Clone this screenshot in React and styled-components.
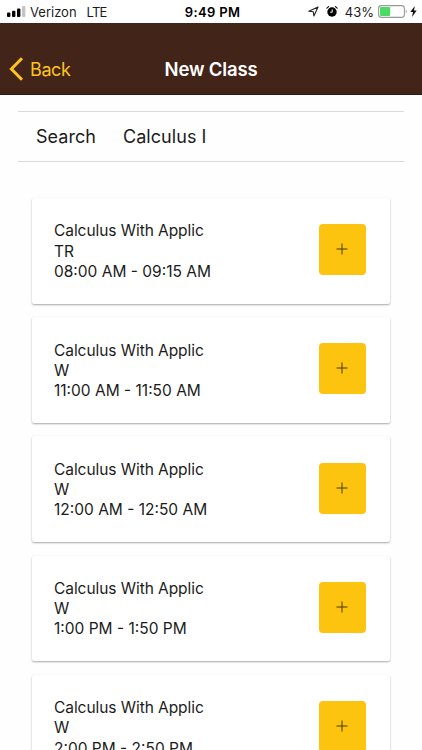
import React from "react";
import styled, { createGlobalStyle, ThemeProvider } from "styled-components";

const theme = {
  brown: "#432418",
  gold: "#fcc30f",
  back: "#fdc422",
  text: "#1b1b1b",
  line: "#d9d9d9",
};

const GlobalStyle = createGlobalStyle`
  * {
    box-sizing: border-box;
  }

  body {
    margin: 0;
    background: #fefefe;
    font-family: Inter, "Liberation Sans", sans-serif;
    overflow: hidden;
  }
`;

const Screen = styled.div`
  width: 422px;
  height: 750px;
  overflow: hidden;
  color: ${(props) => props.theme.text};
`;

const StatusBar = styled.div`
  display: grid;
  grid-template-columns: 1fr auto 1fr;
  align-items: center;
  height: 23px;
  padding: 0 5px 0 7px;
  background: #fff;
  font-size: 13px;
  line-height: 22px;

  svg {
    flex: none;
  }
`;

const StatusGroup = styled.div`
  display: flex;
  align-items: center;
  justify-content: ${(props) => (props.$end ? "flex-end" : "flex-start")};
  white-space: nowrap;
`;

const Carrier = styled.span`
  margin-left: 4px;
  letter-spacing: 0;
`;

const Network = styled.span`
  margin-left: 10px;
  letter-spacing: -0.8px;
`;

const Clock = styled.span`
  padding-left: 1px;
  color: #000;
  font-weight: 600;
  letter-spacing: 0.35px;
`;

const Percent = styled.span`
  margin: 0 4px 0 7px;
`;

const Header = styled.header`
  display: grid;
  grid-template-columns: 1fr auto 1fr;
  align-items: center;
  height: 72px;
  padding: 21px 9px 0;
  background: ${(props) => props.theme.brown};
  border-bottom: 1px solid #341a10;
`;

const BackButton = styled.button`
  display: flex;
  align-items: center;
  gap: 6px;
  padding: 0;
  border: none;
  background: none;
  color: ${(props) => props.theme.back};
  font-family: inherit;
  font-size: 18px;
  letter-spacing: -0.4px;
`;

const Title = styled.h1`
  margin: 0;
  color: #fff;
  font-size: 18.5px;
  font-weight: 600;
  letter-spacing: -0.15px;
`;

const SearchBar = styled.div`
  display: flex;
  align-items: center;
  height: 51px;
  margin: 16px 18px 36px;
  padding-left: 18px;
  border-top: 1px solid ${(props) => props.theme.line};
  border-bottom: 1px solid ${(props) => props.theme.line};
  font-size: 18px;
  letter-spacing: 0.05px;
`;

const SearchLabel = styled.span`
  width: 87px;
`;

const ClassList = styled.div`
  display: flex;
  flex-direction: column;
  gap: 13.6px;
  padding: 0 32px;
`;

const Card = styled.div`
  display: flex;
  flex: none;
  align-items: center;
  justify-content: space-between;
  height: 105.6px;
  padding: 0 24.5px 2px 22px;
  border-radius: 2px;
  background: #fff;
  box-shadow: 0 1px 2px rgba(0, 0, 0, 0.34);
`;

const CardText = styled.div`
  padding-top: 4px;
  font-size: 15.5px;
  line-height: 20.25px;
  white-space: nowrap;
`;

const CourseName = styled.div`
  letter-spacing: -0.06px;
`;

const AddButton = styled.button`
  display: flex;
  align-items: center;
  justify-content: center;
  width: 46.5px;
  height: 51px;
  padding: 0 0 1px;
  border: none;
  border-radius: 4px;
  background: ${(props) => props.theme.gold};
`;

const classes = [
  { name: "Calculus With Applic", days: "TR", time: "08:00 AM - 09:15 AM" },
  { name: "Calculus With Applic", days: "W", time: "11:00 AM - 11:50 AM" },
  { name: "Calculus With Applic", days: "W", time: "12:00 AM - 12:50 AM" },
  { name: "Calculus With Applic", days: "W", time: "1:00 PM - 1:50 PM" },
  { name: "Calculus With Applic", days: "W", time: "2:00 PM - 2:50 PM" },
];

const SignalIcon = () => (
  <svg width="19" height="11" viewBox="0 0 19 11">
    <rect x="0" y="6.5" width="3.4" height="4.5" rx="1" fill="#000" />
    <rect x="5" y="4.8" width="3.4" height="6.2" rx="1" fill="#000" />
    <rect x="10" y="2.5" width="3.4" height="8.5" rx="1" fill="#000" />
    <rect x="15" y="0" width="3.4" height="11" rx="1" fill="#c4c4c4" />
  </svg>
);

const LocationIcon = () => (
  <svg width="11" height="11" viewBox="0 0 11 11">
    <path
      d="M10 1 L0.8 5.2 L5.3 5.8 L5.9 10 Z"
      fill="none"
      stroke="#222"
      strokeWidth="1.1"
      strokeLinejoin="round"
    />
  </svg>
);

const AlarmSvg = styled.svg`
  margin-left: 7px;
`;

const AlarmIcon = () => (
  <AlarmSvg width="12" height="11" viewBox="0 0 12 11">
    <circle cx="6" cy="6" r="4.7" fill="#000" />
    <path
      d="M0.9 2.2 L2.6 0.7 M11.1 2.2 L9.4 0.7"
      stroke="#000"
      strokeWidth="1.1"
      strokeLinecap="round"
    />
    <path d="M6.2 3.4 V6.2 H4.2" fill="none" stroke="#fff" strokeWidth="1" />
  </AlarmSvg>
);

const BatteryIcon = () => (
  <svg width="32" height="13" viewBox="0 0 32 13">
    <rect
      x="0.6"
      y="0.6"
      width="25.8"
      height="11.8"
      rx="2.8"
      fill="none"
      stroke="#999"
      strokeWidth="1.1"
    />
    <rect x="2" y="2" width="10.2" height="9" rx="1" fill="#4cd964" />
    <path d="M27.8 4.5 Q29.8 6.5 27.8 8.5 Z" fill="#999" />
  </svg>
);

const BoltIcon = () => (
  <svg width="7" height="11" viewBox="0 0 7 11">
    <path d="M4.8 0 L0.3 6 H3 L2 11 L6.7 4.5 H4 Z" fill="#111" />
  </svg>
);

const ChevronIcon = () => (
  <svg width="15" height="24" viewBox="0 0 15 24">
    <path
      d="M13 1.3 L2.4 12 L13 22.7"
      fill="none"
      stroke="currentColor"
      strokeWidth="3"
    />
  </svg>
);

const PlusIcon = () => (
  <svg width="12" height="12" viewBox="0 0 12 12">
    <path d="M0.5 6 H11.5 M6 0.5 V11.5" stroke="#4b3a08" strokeWidth="1" />
  </svg>
);

const ClassCard = ({ name, days, time }) => (
  <Card>
    <CardText>
      <CourseName>{name}</CourseName>
      <div>{days}</div>
      <div>{time}</div>
    </CardText>
    <AddButton aria-label="Add class">
      <PlusIcon />
    </AddButton>
  </Card>
);

const App = () => {
  return (
    <ThemeProvider theme={theme}>
      <GlobalStyle />
      <Screen>
        <StatusBar>
          <StatusGroup>
            <SignalIcon />
            <Carrier>Verizon</Carrier>
            <Network>LTE</Network>
          </StatusGroup>
          <Clock>9:49 PM</Clock>
          <StatusGroup $end>
            <LocationIcon />
            <AlarmIcon />
            <Percent>43%</Percent>
            <BatteryIcon />
            <BoltIcon />
          </StatusGroup>
        </StatusBar>
        <Header>
          <BackButton>
            <ChevronIcon />
            Back
          </BackButton>
          <Title>New Class</Title>
        </Header>
        <SearchBar>
          <SearchLabel>Search</SearchLabel>
          <span>Calculus I</span>
        </SearchBar>
        <ClassList>
          {classes.map((item, index) => (
            <ClassCard key={index} {...item} />
          ))}
        </ClassList>
      </Screen>
    </ThemeProvider>
  );
};

export default App;
